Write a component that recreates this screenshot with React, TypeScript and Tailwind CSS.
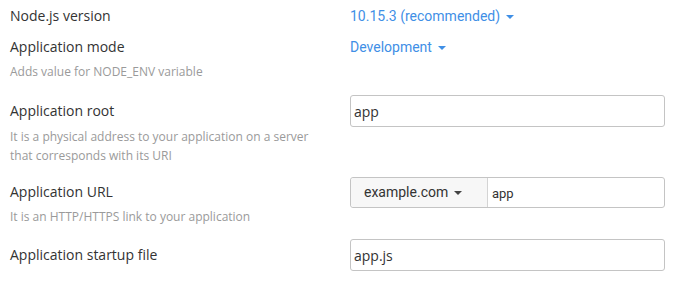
import React from "react";

const label = "font-['Open_Sans',sans-serif] text-[14px] leading-[20px] text-[#333]";
const help = "font-['Open_Sans',sans-serif] text-[12px] text-[#9a9a9a]";
const link = "font-['Roboto',sans-serif] text-[14px] leading-[20px] text-[#3f8fe6] flex items-center";

function Caret({ color = "#3f8fe6" }: { color?: string }) {
  return (
    <svg width="8" height="4" viewBox="0 0 8 4" className="ml-[6px] mt-[1px]">
      <path d="M0 0 L8 0 L4 4 Z" fill={color} />
    </svg>
  );
}

export default function App() {
  return (
    <div className="w-[678px] h-[281px] bg-white">
      {/* Node.js version */}
      <div className="flex pt-[6px]">
        <div className="w-[350px] pl-[10px]">
          <p className={label}>Node.js version</p>
        </div>
        <div className={link}>
          10.15.3 (recommended)
          <Caret />
        </div>
      </div>

      {/* Application mode */}
      <div className="flex mt-[11px]">
        <div className="w-[350px] pl-[10px]">
          <p className={label}>Application mode</p>
          <p className={`${help} leading-[18px] mt-[6px]`}>Adds value for NODE_ENV variable</p>
        </div>
        <div className={`${link} self-start`}>
          Development
          <Caret />
        </div>
      </div>

      {/* Application root */}
      <div className="flex mt-[14px]">
        <div className="w-[350px] pl-[10px] pt-[6px]">
          <p className={label}>Application root</p>
          <p className={`${help} leading-[19px] mt-[6px]`}>
            It is a physical address to your application on a server
            <br />
            that corresponds with its URI
          </p>
        </div>
        <div className="w-[315px] h-[32px] border border-[#c4c4c4] rounded-[3px] flex items-center pl-[3px] font-['Open_Sans',sans-serif] text-[14px] text-[#333]">
          app
        </div>
      </div>

      {/* Application URL */}
      <div className="flex mt-[12px]">
        <div className="w-[350px] pl-[10px] pt-[5px]">
          <p className={label}>Application URL</p>
          <p className={`${help} leading-[18px] mt-[6px]`}>It is an HTTP/HTTPS link to your application</p>
        </div>
        <div className="w-[315px] h-[31px] border border-[#c4c4c4] rounded-[3px] flex">
          <div className="w-[137px] bg-[#f7f7f7] border-r border-[#d4d4d4] rounded-l-[3px] flex items-center pl-[13px] font-['Roboto',sans-serif] text-[14px] text-[#333]">
            example.com
            <Caret color="#444" />
          </div>
          <div className="flex-1 flex items-center pl-[4px] pt-[2px] font-['Roboto',sans-serif] text-[13px] text-[#333]">
            app
          </div>
        </div>
      </div>

      {/* Application startup file */}
      <div className="flex mt-[13px]">
        <div className="w-[350px] pl-[10px] pt-[6px]">
          <p className={label}>Application startup file</p>
        </div>
        <div className="w-[315px] h-[32px] border border-[#c4c4c4] rounded-[3px] flex items-center pl-[3px] font-['Open_Sans',sans-serif] text-[14px] text-[#333]">
          app.js
        </div>
      </div>
    </div>
  );
}
